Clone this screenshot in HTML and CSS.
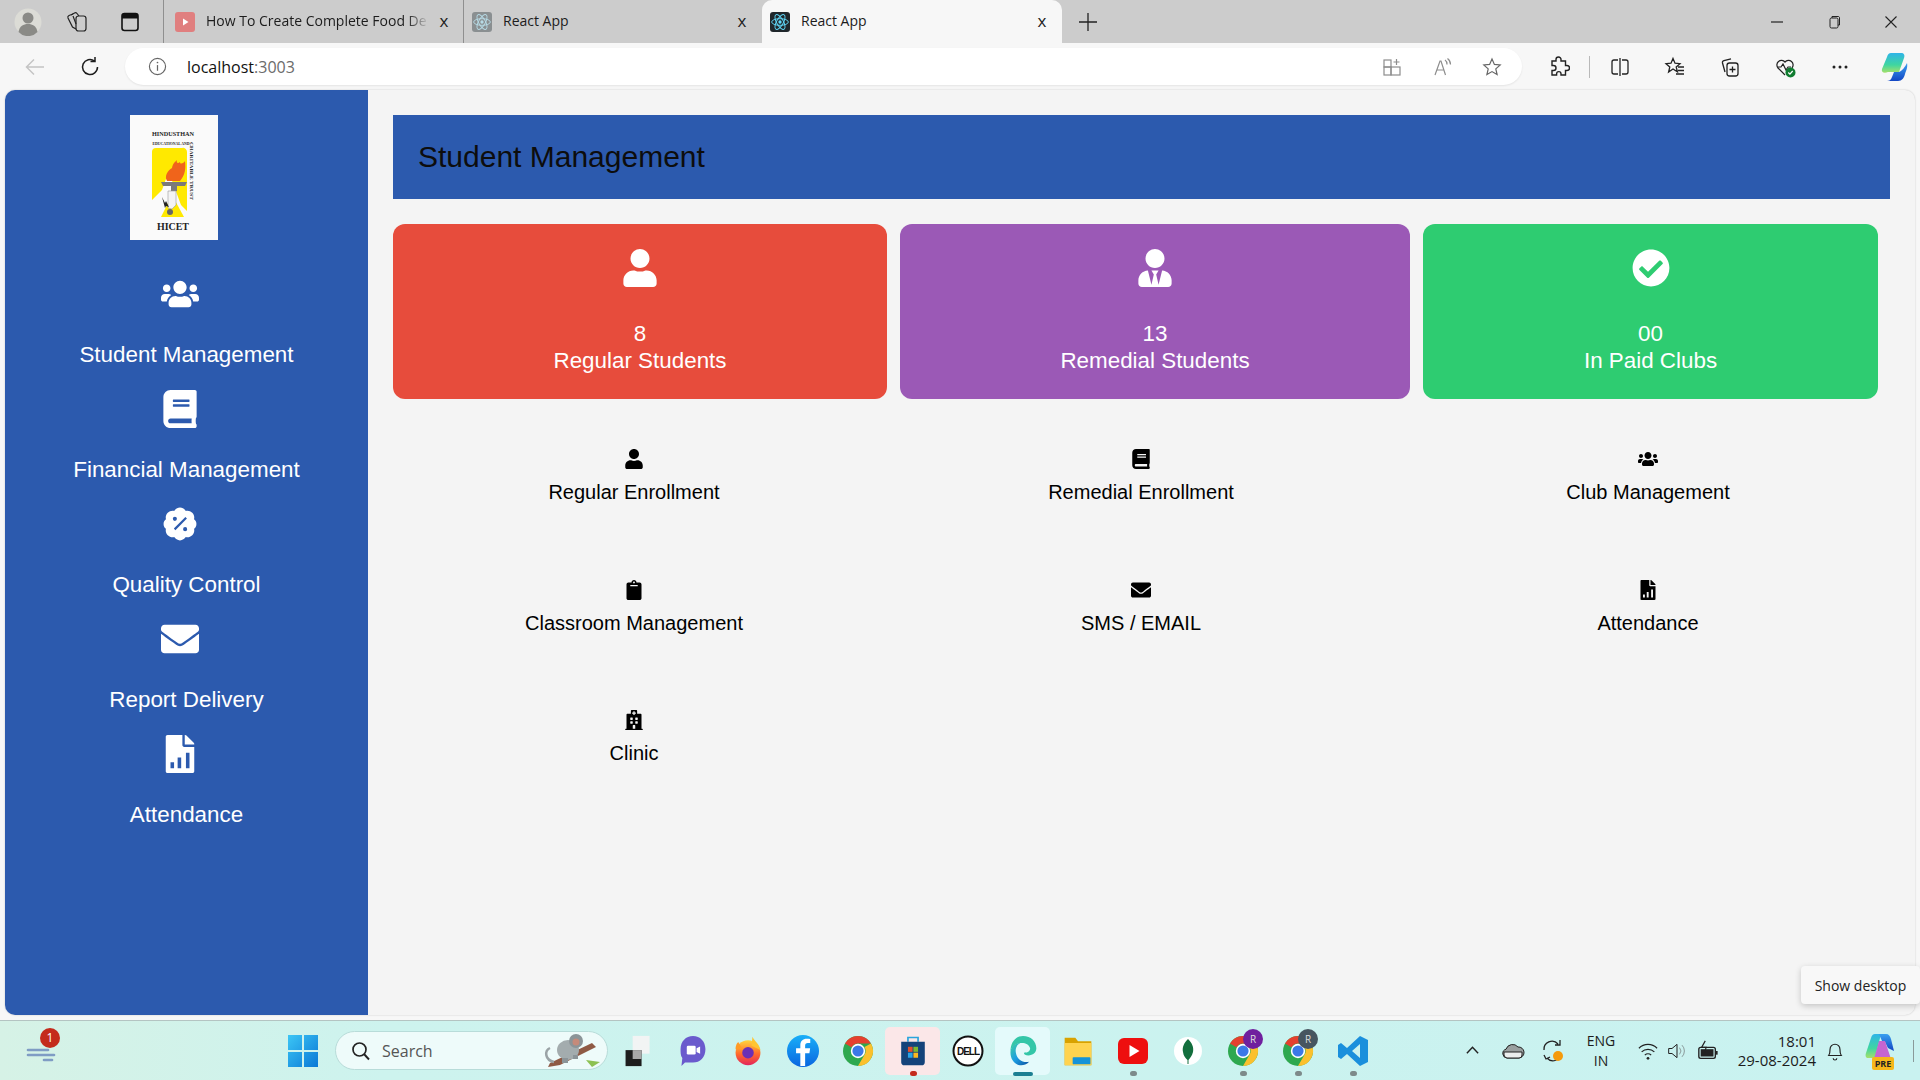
FILE: index.html
```html
<!DOCTYPE html>
<html>
<head>
    <meta charset="utf-8">
    <title>React App</title>
    <link rel="stylesheet" href="styles.css">
</head>
<body>
    <!-- icon sprite -->
    <svg class="sprite" xmlns="http://www.w3.org/2000/svg">
        <defs>
            <linearGradient id="edgeGrad" x1="0" y1="0" x2="1" y2="1"><stop offset="0" stop-color="#3fd0a0"/><stop offset=".5" stop-color="#1b9de2"/><stop offset="1" stop-color="#0c4f9e"/></linearGradient>
            <linearGradient id="winGrad" x1="0" y1="0" x2="1" y2="1"><stop offset="0" stop-color="#3cc6f5"/><stop offset="1" stop-color="#0a78d6"/></linearGradient>
            <linearGradient id="fbGrad" x1="0" y1="0" x2="0" y2="1"><stop offset="0" stop-color="#19aff8"/><stop offset="1" stop-color="#0a66e0"/></linearGradient>
            <linearGradient id="copLeft" x1="0" y1="0" x2="0" y2="1"><stop offset="0" stop-color="#2fb4e8"/><stop offset=".6" stop-color="#3fd6a0"/><stop offset="1" stop-color="#a6e06a"/></linearGradient>
            <linearGradient id="copRight" x1="0" y1="0" x2="0" y2="1"><stop offset="0" stop-color="#3aa0f0"/><stop offset="1" stop-color="#1246c4"/></linearGradient>
            <linearGradient id="foxGrad" x1="0" y1="0" x2="0" y2="1"><stop offset="0" stop-color="#ffd53d"/><stop offset=".55" stop-color="#ff6a2b"/><stop offset="1" stop-color="#e3245c"/></linearGradient>
        </defs>
        <symbol id="i-users" viewBox="0 0 640 512"><path d="M96 224c35.3 0 64-28.7 64-64s-28.7-64-64-64-64 28.7-64 64 28.7 64 64 64zm448 0c35.3 0 64-28.7 64-64s-28.7-64-64-64-64 28.7-64 64 28.7 64 64 64zm32 32h-64c-17.6 0-33.5 7.1-45.1 18.6 40.3 22.1 68.9 62 75.1 109.4h66c17.7 0 32-14.3 32-32v-32c0-35.3-28.7-64-64-64zm-256 0c61.9 0 112-50.1 112-112S381.9 32 320 32 208 82.1 208 144s50.1 112 112 112zm76.8 32h-8.3c-20.8 10-43.9 16-68.5 16s-47.6-6-68.5-16h-8.3C179.6 288 128 339.6 128 403.2V432c0 26.5 21.5 48 48 48h288c26.5 0 48-21.5 48-48v-28.8c0-63.6-51.6-115.2-115.2-115.2zm-223.7-13.4C161.5 263.1 145.6 256 128 256H64c-35.3 0-64 28.7-64 64v32c0 17.7 14.3 32 32 32h65.9c6.3-47.4 34.9-87.3 75.2-109.4z"/></symbol>
        <symbol id="i-book" viewBox="0 0 448 512"><path d="M448 360V24c0-13.3-10.7-24-24-24H96C43 0 0 43 0 96v320c0 53 43 96 96 96h328c13.3 0 24-10.7 24-24v-16c0-7.5-3.5-14.3-8.9-18.7-4.2-15.4-4.2-59.3 0-74.7 5.4-4.3 8.9-11.1 8.9-18.6zM128 134c0-3.3 2.7-6 6-6h212c3.3 0 6 2.7 6 6v20c0 3.3-2.7 6-6 6H134c-3.3 0-6-2.7-6-6v-20zm0 64c0-3.3 2.7-6 6-6h212c3.3 0 6 2.7 6 6v20c0 3.3-2.7 6-6 6H134c-3.3 0-6-2.7-6-6v-20zm253.4 250H96c-17.7 0-32-14.3-32-32 0-17.6 14.4-32 32-32h285.4c-1.9 17.1-1.9 46.9 0 64z"/></symbol>
        <symbol id="i-badge" viewBox="-40 -40 592 592"><path fill-rule="evenodd" d="M256 0c39 0 72 21 90 52 35-9 74 1 101 28s37 66 28 101c24 18 37 40 37 75s-13 57-37 75c9 35-1 74-28 101s-66 37-101 28c-18 24-51 52-90 52s-72-28-90-52c-35 9-74-1-101-28s-37-66-28-101C13 313 0 291 0 256s13-57 37-75c-9-35 1-74 28-101s66-37 101-28C184 21 217 0 256 0zM176 144a32 32 0 1 0 0 64 32 32 0 1 0 0-64zm160 160a32 32 0 1 0 0 64 32 32 0 1 0 0-64zM340 148l-180 180 24 24 180-180z"/></symbol>
        <symbol id="i-envelope" viewBox="0 0 512 512"><path d="M502.3 190.8c3.9-3.1 9.7-.2 9.7 4.7V400c0 26.5-21.5 48-48 48H48c-26.5 0-48-21.5-48-48V195.6c0-5 5.7-7.8 9.7-4.7 22.4 17.4 52.1 39.5 154.1 113.6 21.1 15.4 56.7 47.8 92.2 47.6 35.7.3 72-32.8 92.3-47.6 102-74.1 131.6-96.3 154-113.7zM256 320c23.2.4 56.6-29.2 73.4-41.4 132.7-96.3 142.8-104.7 173.4-128.7 5.8-4.5 9.2-11.5 9.2-18.9v-19c0-26.5-21.5-48-48-48H48C21.5 64 0 85.5 0 112v19c0 7.4 3.4 14.3 9.2 18.9 30.6 23.9 40.7 32.4 173.4 128.7 16.8 12.2 50.2 41.8 73.4 41.4z"/></symbol>
        <symbol id="i-report" viewBox="0 0 384 512"><path fill-rule="evenodd" d="M224 136V0H24C10.7 0 0 10.7 0 24v464c0 13.3 10.7 24 24 24h336c13.3 0 24-10.7 24-24V160H248c-13.2 0-24-10.8-24-24zM64 368h48v80H64zm96-64h48v144h-48zm112-64h48v208h-48z"/><path d="M384 121.9V128H256V0h6.1c6.4 0 12.5 2.5 17 7l97.9 98c4.5 4.5 7 10.6 7 16.9z"/></symbol>
        <symbol id="i-user" viewBox="0 0 448 512"><path d="M224 256c70.7 0 128-57.3 128-128S294.7 0 224 0 96 57.3 96 128s57.3 128 128 128zm89.6 32h-16.7c-22.2 10.2-46.9 16-72.9 16s-50.6-5.8-72.9-16h-16.7C60.2 288 0 348.2 0 422.4V464c0 26.5 21.5 48 48 48h352c26.5 0 48-21.5 48-48v-41.6c0-74.2-60.2-134.4-134.4-134.4z"/></symbol>
        <symbol id="i-tie" viewBox="0 0 448 512"><path d="M224 256c70.7 0 128-57.3 128-128S294.7 0 224 0 96 57.3 96 128s57.3 128 128 128zm95.8 32.6L272 480l-32-136 32-56h-96l32 56-32 136-47.8-191.4C56.9 292 0 350.3 0 422.4V464c0 26.5 21.5 48 48 48h352c26.5 0 48-21.5 48-48v-41.6c0-72.1-56.9-130.4-128.2-133.8z"/></symbol>
        <symbol id="i-check" viewBox="0 0 512 512"><path d="M504 256c0 136.967-111.033 248-248 248S8 392.967 8 256 119.033 8 256 8s248 111.033 248 248zM227.314 387.314l184-184c6.248-6.248 6.248-16.379 0-22.627l-22.627-22.627c-6.248-6.249-16.379-6.249-22.628 0L216 308.118l-70.059-70.059c-6.248-6.248-16.379-6.248-22.628 0l-22.627 22.627c-6.248 6.248-6.248 16.379 0 22.627l104 104c6.249 6.249 16.379 6.249 22.628.001z"/></symbol>
        <symbol id="i-clipboard" viewBox="0 0 384 512"><path d="M384 112v352c0 26.51-21.49 48-48 48H48c-26.51 0-48-21.49-48-48V112c0-26.51 21.49-48 48-48h80c0-35.29 28.71-64 64-64s64 28.71 64 64h80c26.51 0 48 21.49 48 48zM192 40c-13.255 0-24 10.745-24 24s10.745 24 24 24 24-10.745 24-24-10.745-24-24-24m96 114v-20a6 6 0 0 0-6-6H102a6 6 0 0 0-6 6v20a6 6 0 0 0 6 6h180a6 6 0 0 0 6-6z"/></symbol>
        <symbol id="i-hospital" viewBox="0 0 448 512"><path d="M448 492v20H0v-20c0-6.627 5.373-12 12-12h20V120c0-13.255 10.745-24 24-24h88V24c0-13.255 10.745-24 24-24h112c13.255 0 24 10.745 24 24v72h88c13.255 0 24 10.745 24 24v360h20c6.627 0 12 5.373 12 12zM308 192h-40c-6.627 0-12 5.373-12 12v40c0 6.627 5.373 12 12 12h40c6.627 0 12-5.373 12-12v-40c0-6.627-5.373-12-12-12zm-168 64h40c6.627 0 12-5.373 12-12v-40c0-6.627-5.373-12-12-12h-40c-6.627 0-12 5.373-12 12v40c0 6.627 5.373 12 12 12zm104 128h-40c-6.627 0-12 5.373-12 12v84h64v-84c0-6.627-5.373-12-12-12zm64-96h-40c-6.627 0-12 5.373-12 12v40c0 6.627 5.373 12 12 12h40c6.627 0 12-5.373 12-12v-40c0-6.627-5.373-12-12-12zm-116 12c0-6.627-5.373-12-12-12h-40c-6.627 0-12 5.373-12 12v40c0 6.627 5.373 12 12 12h40c6.627 0 12-5.373 12-12v-40zM182 96h26v26a6 6 0 0 0 6 6h20a6 6 0 0 0 6-6V96h26a6 6 0 0 0 6-6V70a6 6 0 0 0-6-6h-26V38a6 6 0 0 0-6-6h-20a6 6 0 0 0-6 6v26h-26a6 6 0 0 0-6 6v20a6 6 0 0 0 6 6z"/></symbol>
        <symbol id="i-react" viewBox="0 0 24 24"><g fill="none" stroke="currentColor" stroke-width="1.1"><ellipse cx="12" cy="12" rx="10" ry="4"/><ellipse cx="12" cy="12" rx="10" ry="4" transform="rotate(60 12 12)"/><ellipse cx="12" cy="12" rx="10" ry="4" transform="rotate(120 12 12)"/></g><circle cx="12" cy="12" r="2" fill="currentColor"/></symbol>
        <symbol id="i-chrome" viewBox="0 0 32 32"><circle cx="16" cy="16" r="15" fill="#2ea84f"/><path d="M16 1a15 15 0 0 1 13 7.5H16a7.5 7.5 0 0 0-6.5 3.8L3 8.5A15 15 0 0 1 16 1z" fill="#e5402f"/><path d="M29 8.5A15 15 0 0 1 16 31l6.5-11.2A7.5 7.5 0 0 0 22.5 12z" fill="#fbc02d"/><circle cx="16" cy="16" r="7.2" fill="#fff"/><circle cx="16" cy="16" r="5.6" fill="#3b78e7"/></symbol>
    </svg>

    <!-- browser tabs -->
    <div class="tabstrip">
        <div class="strip-tools">
            <svg class="profile" viewBox="0 0 28 28"><circle cx="14" cy="14" r="13.5" fill="#dcdcd6"/><circle cx="14" cy="10" r="5.5" fill="#8a8a86"/><path d="M4.5 24c1-6 5-8 9.500-8s8.500 2 9.500 8a13 13 0 0 1-19 0z" fill="#8a8a86"/></svg>
            <svg class="tool tool-collections" viewBox="0 0 24 24"><g fill="none" stroke="#222" stroke-width="1.200"><rect x="11" y="6" width="10" height="15" rx="2.500"/><path d="M11 19 7.500 17 3 8a2 2 0 0 1 1-2.500L8 4"/><path d="M14 6l-2-2.500a2 2 0 0 0-2.500-.5L6 5"/><path d="M8 6l3 8"/></g></svg>
            <svg class="tool tool-tabs" viewBox="0 0 24 24"><rect x="4" y="3.500" width="16" height="17" rx="2.500" fill="none" stroke="#111" stroke-width="1.600"/><path d="M4 6a2.500 2.500 0 0 1 2.500-2.500h11A2.500 2.500 0 0 1 20 6v2.500H4z" fill="#111"/></svg>
        </div>
        <div class="tab tab-first">
            <svg class="favicon" viewBox="0 0 20 20"><rect width="20" height="20" rx="3" fill="#e07f7f"/><path d="M8 6.500v7l5.500-3.500z" fill="#fff"/></svg>
            <span class="tab-title fade">How To Create Complete Food De</span>
            <span class="tab-close">x</span>
        </div>
        <div class="tab tab-second">
            <svg class="favicon react-dim" viewBox="0 0 20 20"><rect width="20" height="20" rx="3" fill="#8a8f91"/><use href="#i-react" width="20" height="20"/></svg>
            <span class="tab-title">React App</span>
            <span class="tab-close">x</span>
        </div>
        <div class="tab tab-active">
            <svg class="favicon react-live" viewBox="0 0 20 20"><rect width="20" height="20" rx="3" fill="#20272b"/><use href="#i-react" width="20" height="20"/></svg>
            <span class="tab-title">React App</span>
            <span class="tab-close">x</span>
        </div>
        <svg class="new-tab" viewBox="0 0 20 20"><path d="M10 1v18M1 10h18" stroke="#222" stroke-width="1.300"/></svg>
        <div class="window-controls">
            <svg viewBox="0 0 16 16"><path d="M2 8h12" stroke="#222" stroke-width="1.200"/></svg>
            <svg viewBox="0 0 16 16"><g fill="none" stroke="#222" stroke-width="1"><rect x="4" y="4" width="8" height="10" rx="1.500"/><path d="M6 4V2.500h6.500a1.500 1.500 0 0 1 1 1V11H12"/></g></svg>
            <svg viewBox="0 0 16 16"><path d="M2.500 2.500l11 11M13.500 2.500l-11 11" stroke="#222" stroke-width="1.100"/></svg>
        </div>
    </div>

    <!-- browser toolbar -->
    <div class="toolbar">
        <svg class="nav-btn nav-back" viewBox="0 0 24 24"><path d="M21 12H3.500M11 4.500 3.500 12l7.500 7.500" fill="none" stroke="#c4c4c4" stroke-width="1.500"/></svg>
        <svg class="nav-btn nav-reload" viewBox="0 0 24 24"><path d="M19.500 12a7.500 7.500 0 1 1-3-6M17 2v4.500h-4.500" fill="none" stroke="#1c1c1c" stroke-width="1.500"/></svg>
        <div class="address">
            <svg class="addr-info" viewBox="0 0 20 20"><circle cx="10" cy="10" r="8.500" fill="none" stroke="#666" stroke-width="1.200"/><path d="M10 8.500v6" stroke="#666" stroke-width="1.300"/><circle cx="10" cy="5.800" r=".9" fill="#666"/></svg>
            <span class="url">localhost<span class="url-port">:3003</span></span>
            <svg class="addr-icon" viewBox="0 0 20 20"><g fill="none" stroke="#8d8d8d" stroke-width="1.200"><rect x="2" y="3" width="7" height="7"/><rect x="2" y="10" width="7" height="8"/><rect x="9" y="10" width="9" height="8"/><path d="M14.500 2v6M11.500 5h6"/></g></svg>
            <svg class="addr-icon" viewBox="0 0 20 20"><g fill="none" stroke="#8d8d8d" stroke-width="1.200"><path d="M3 18 8 4h1l4.500 14M5 13h7"/><path d="M13 3c1.500 1 2 2.500 2 4.500M15.500 1.500c2 1.500 3 3.500 3 6"/></g></svg>
            <svg class="addr-icon" viewBox="0 0 20 20"><path d="M10 2l2.400 5.400 5.800.6-4.400 3.900 1.300 5.700L10 14.600l-5.100 3 1.300-5.700L1.800 8l5.800-.6z" fill="none" stroke="#666" stroke-width="1.200"/></svg>
        </div>
        <div class="toolbar-right">
            <svg viewBox="0 0 22 22" class="tb-ext"><path d="M8 3.500a2.500 2.500 0 0 1 5 0V5h4.500v4.500H19a2.500 2.500 0 0 1 0 5h-1.500V19H13v-1.200a2.200 2.200 0 0 0-4.400 0V19H4v-4.500h1.500a2.500 2.500 0 0 0 0-5H4V5h4z" fill="none" stroke="#222" stroke-width="1.400"/></svg>
            <span class="tb-sep"></span>
            <svg viewBox="0 0 22 22" class="tb-split"><g fill="none" stroke="#222" stroke-width="1.300"><path d="M9 4H5a2 2 0 0 0-2 2v10a2 2 0 0 0 2 2h4M13 4h4a2 2 0 0 1 2 2v10a2 2 0 0 1-2 2h-4M11 2v18"/></g></svg>
            <svg viewBox="0 0 22 22" class="tb-favs"><g fill="none" stroke="#222" stroke-width="1.300"><path d="M9 2.500l2 4.700 5 .5-3.800 3.300 1.200 4.800L9 13l-4.400 3 1.200-5L2 7.700l5-.5z"/><path d="M14 11h6M14 14.500h6M12 18h8"/></g></svg>
            <svg viewBox="0 0 22 22" class="tb-coll"><g fill="none" stroke="#222" stroke-width="1.300"><path d="M6 16 3.500 7a2 2 0 0 1 1.400-2.400L12 2.800"/><rect x="8" y="7" width="11" height="13" rx="2.500"/><path d="M13.500 10.500v6M10.500 13.500h6"/></g></svg>
            <svg viewBox="0 0 22 22" class="tb-health"><path d="M11 19 4 12a4.500 4.500 0 0 1 7-6 4.500 4.500 0 0 1 7 6M3 11h4l2-3 3 6 2-3h3" fill="none" stroke="#222" stroke-width="1.200"/><circle cx="16.500" cy="16.500" r="5" fill="#107c30"/><path d="M14.300 16.500l1.600 1.700 2.800-3.200" fill="none" stroke="#fff" stroke-width="1.200"/></svg>
            <svg viewBox="0 0 22 22" class="tb-more"><circle cx="5" cy="11" r="1.500" fill="#222"/><circle cx="11" cy="11" r="1.500" fill="#222"/><circle cx="17" cy="11" r="1.500" fill="#222"/></svg>
            <svg viewBox="0 0 30 30" class="tb-copilot"><path d="M12 1h10c3 0 4 2 3 5l-5 14H9c-4 2-7 0-6-3L8 5c.7-2.500 2-4 4-4z" fill="url(#copLeft)"/><path d="M28 11c1 4-1 8-2 11-1 4-3 7-7 7H8c2 0 4-1 5-4l2-5h5c3-1 6-5 8-9z" fill="url(#copRight)"/></svg>
        </div>
    </div>

    <!-- the app -->
    <div class="viewport">
        <aside class="sidebar">
            <svg class="logo" viewBox="0 0 88 125">
                <rect width="88" height="125" fill="#fafafa"/>
                <text x="43" y="21" textLength="42" lengthAdjust="spacingAndGlyphs" class="logo-small">HINDUSTHAN</text>
                <text x="41" y="30" textLength="37" lengthAdjust="spacingAndGlyphs" class="logo-tiny">EDUCATIONAL AND</text>
                <text class="logo-tiny" transform="translate(60 27) rotate(90)" x="29" textLength="58" lengthAdjust="spacingAndGlyphs">CHARITABLE TRUST</text>
                <path d="M22 37a4 4 0 0 1 4-4h26a4 4 0 0 1 5 4v59l-6-6-10-27-5 1-4 11-10 10z" fill="#ffe900"/>
                <path d="M31 102l11-22 12 22z" fill="#ffe900"/>
                <path d="M37 66c-3-5 1-11 5-13 1-5 3-6 5-8-1 3 1 4 3 2 0 3 4 1 5-1 1 8 0 14-5 20z" fill="#f0641b"/>
                <path d="M31 67h26l-2 4H47v5h-6v-5h-8z" fill="#7a7a7a"/>
                <path d="M38 76h8v14l-4 4-4-1z" fill="#f4f4f4" stroke="#9a9a9a" stroke-width=".6"/>
                <path d="M32 82l3 6 1-2 3 6-3-1-1 2z" fill="#222"/>
                <circle cx="40" cy="97" r="3" fill="#666"/>
                <text x="43" y="115" textLength="32" lengthAdjust="spacingAndGlyphs" class="logo-name">HICET</text>
            </svg>
            <nav class="side-nav">
                <a class="side-item"><svg class="side-icon icon-short"><use href="#i-users"/></svg><span>Student Management</span></a>
                <a class="side-item"><svg class="side-icon"><use href="#i-book"/></svg><span>Financial Management</span></a>
                <a class="side-item"><svg class="side-icon"><use href="#i-badge"/></svg><span>Quality Control</span></a>
                <a class="side-item"><svg class="side-icon"><use href="#i-envelope"/></svg><span>Report Delivery</span></a>
                <a class="side-item"><svg class="side-icon"><use href="#i-report"/></svg><span>Attendance</span></a>
            </nav>
        </aside>
        <main class="content">
            <header class="page-head">Student Management</header>
            <section class="stats">
                <div class="stat stat-red"><svg class="stat-icon"><use href="#i-user"/></svg><div class="stat-num">8</div><div>Regular Students</div></div>
                <div class="stat stat-purple"><svg class="stat-icon"><use href="#i-tie"/></svg><div class="stat-num">13</div><div>Remedial Students</div></div>
                <div class="stat stat-green"><svg class="stat-icon"><use href="#i-check"/></svg><div class="stat-num">00</div><div>In Paid Clubs</div></div>
            </section>
            <section class="actions">
                <a class="action"><svg class="action-icon"><use href="#i-user"/></svg><span>Regular Enrollment</span></a>
                <a class="action"><svg class="action-icon"><use href="#i-book"/></svg><span>Remedial Enrollment</span></a>
                <a class="action"><svg class="action-icon"><use href="#i-users"/></svg><span>Club Management</span></a>
                <a class="action"><svg class="action-icon"><use href="#i-clipboard"/></svg><span>Classroom Management</span></a>
                <a class="action"><svg class="action-icon"><use href="#i-envelope"/></svg><span>SMS / EMAIL</span></a>
                <a class="action"><svg class="action-icon"><use href="#i-report"/></svg><span>Attendance</span></a>
                <a class="action"><svg class="action-icon"><use href="#i-hospital"/></svg><span>Clinic</span></a>
            </section>
        </main>
        <div class="desktop-tip">Show desktop</div>
    </div>

    <!-- windows taskbar -->
    <footer class="taskbar">
        <div class="widget">
            <svg viewBox="0 0 30 16" class="widget-wind"><g fill="none" stroke="#7f9cc4" stroke-width="2.600" stroke-linecap="round"><path d="M2 3h20"/><path d="M2 8h26"/><path d="M18 13h8"/></g></svg>
            <span class="widget-badge">1</span>
        </div>
        <svg class="start" viewBox="0 0 30 36"><path d="M0 2h14v15H0zM16 2h14v15H16zM0 19h14v15H0zM16 19h14v15H16z" fill="url(#winGrad)"/></svg>
        <div class="search">
            <svg class="search-glass" viewBox="0 0 20 20"><circle cx="8.500" cy="8.500" r="6.500" fill="none" stroke="#222" stroke-width="1.700"/><path d="M13 13l5 5.500" stroke="#222" stroke-width="1.900"/></svg>
            <span class="search-text">Search</span>
            <svg class="search-art" viewBox="0 0 60 34">
                <path d="M6 33l2-4 42-20 4 4-36 18z" fill="#8f5a45"/>
                <path d="M44 26l14 2-8 5z" fill="#8cc152"/>
                <path d="M12 28C3 26 2 17 8 14" fill="none" stroke="#9aa3a6" stroke-width="2.500"/>
                <ellipse cx="26" cy="16" rx="11" ry="10" fill="#a3acae"/>
                <path d="M20 24h6v5h-6zM31 21h5v4h-5z" fill="#8b9498"/>
                <circle cx="34" cy="7" r="7" fill="#8b9498"/>
                <circle cx="34" cy="8" r="3.500" fill="#c58a7a"/>
            </svg>
        </div>
        <div class="apps">
            <div class="app"><svg viewBox="0 0 30 36"><rect x="9" y="1" width="19" height="20" fill="#f2f4f4"/><rect x="1" y="17" width="18" height="18" fill="#1d1d1d"/><rect x="9" y="17" width="10" height="10" fill="#a8a8a8"/></svg></div>
            <div class="app"><svg viewBox="0 0 30 36"><path d="M15 1c8 0 14 6 14 15s-6 15-14 15H6l-4 4 1-9C1 23 1 20 1 16 1 7 7 1 15 1z" fill="#6a5acd"/><rect x="8" y="12" width="10" height="10" rx="1.500" fill="#fff"/><path d="M19 15l4-2v8l-4-2z" fill="#fff"/></svg></div>
            <div class="app"><svg viewBox="0 0 30 36"><circle cx="15" cy="20" r="14" fill="url(#foxGrad)"/><path d="M20 2c2 5 8 8 9 15L19 12z" fill="#ffc531"/><circle cx="15" cy="20" r="6.500" fill="#6b2fb5"/><path d="M1 16c0-4 1-6 3-8l5 8z" fill="#ff9b26"/></svg></div>
            <div class="app"><svg viewBox="0 0 30 30"><circle cx="15" cy="15" r="15" fill="url(#fbGrad)"/><path d="M17 29V17h4l.7-4.500H17V10c0-1.400.7-2.400 2.500-2.400h2.300V3.800C20.800 3.700 19.500 3.500 18.400 3.500c-3.500 0-5.900 2.100-5.900 6v3H8.500V17h4v12z" fill="#fff"/></svg></div>
            <div class="app"><svg viewBox="0 0 32 32"><use href="#i-chrome"/></svg></div>
            <div class="app app-store">
                <svg viewBox="0 0 30 38"><path d="M9 8V3h12v5" fill="none" stroke="#2aa5dc" stroke-width="2"/><path d="M1 8h28v24a4 4 0 0 1-4 4H5a4 4 0 0 1-4-4z" fill="#14437a"/><rect x="9" y="14" width="5.500" height="6" fill="#e5502d"/><rect x="15.500" y="14" width="5.500" height="6" fill="#7cb82f"/><rect x="9" y="21" width="5.500" height="6" fill="#29a4e8"/><rect x="15.500" y="21" width="5.500" height="6" fill="#fbb81f"/></svg>
                <i class="run-dot dot-red"></i>
            </div>
            <div class="app"><svg viewBox="0 0 32 32"><circle cx="16" cy="16" r="14.500" fill="#fff" stroke="#111" stroke-width="2"/><text x="16" y="19.500" class="dell-mark">DELL</text></svg></div>
            <div class="app app-edge">
                <svg viewBox="0 0 32 36"><path d="M16 1c9 0 15 6 15 14 0 5-4 8-9 8-3 0-5-1-5-3 5 0 7-2 7-5-1-4-5-6-9-6C8 9 3 13 2 18 2 8 8 1 16 1z" fill="#34c6a8"/><path d="M2 18c1-6 6-9 11-9-4 2-6 6-5 11 1 7 8 12 15 10-3 3-6 4-9 4-7 0-13-7-12-16z" fill="url(#edgeGrad)"/></svg>
                <i class="run-bar"></i>
            </div>
            <div class="app"><svg viewBox="0 0 32 36"><path d="M1 3h12l3 4h15v27H1z" fill="#d9a200"/><rect x="1" y="9" width="30" height="25" fill="#ffd34f"/><rect x="10" y="25" width="20" height="8" rx="1" fill="#1593d8"/></svg></div>
            <div class="app"><svg viewBox="0 0 32 28"><rect x="1" y="1" width="30" height="26" rx="6" fill="#ee0f0f"/><path d="M12.500 8v12l10-6z" fill="#fff"/></svg><i class="run-dot"></i></div>
            <div class="app"><svg viewBox="0 0 32 32"><circle cx="16" cy="16" r="14" fill="#fff"/><path d="M16 4c4 4 6 8 5 13-1 4-3 6-4.500 8V29h-1v-4c-2-2-4-4-4.500-8C10 12 12 8 16 4z" fill="#136e3d"/></svg></div>
            <div class="app">
                <svg viewBox="0 0 32 32"><use href="#i-chrome"/></svg>
                <b class="chrome-tag tag-purple">R</b><i class="run-dot"></i>
            </div>
            <div class="app">
                <svg viewBox="0 0 32 32"><use href="#i-chrome"/></svg>
                <b class="chrome-tag tag-slate">R</b><i class="run-dot"></i>
            </div>
            <div class="app"><svg viewBox="0 0 32 32"><path d="M23 1l8 4v22l-8 4L10 19l-6 5-3-2V10l3-2 6 5zM23 9l-8 7 8 7z" fill="#1a8fdc" fill-rule="evenodd"/></svg><i class="run-dot"></i></div>
        </div>
        <div class="tray">
            <svg class="tray-chevron" viewBox="0 0 16 16"><path d="M2 11l6-6.500 6 6.500" fill="none" stroke="#222" stroke-width="1.500"/></svg>
            <svg class="tray-cloud" viewBox="0 0 24 20"><path d="M6 17a4.500 4.500 0 0 1-1-8.800A7 7 0 0 1 17 6a5.500 5.500 0 0 1 1 11z" fill="#9a9f9f" stroke="#222" stroke-width="1"/><path d="M3 11h18v3a3 3 0 0 1-3 3H6a3.500 3.500 0 0 1-3-3z" fill="#eceeee" stroke="#222" stroke-width="1"/></svg>
            <svg class="tray-sync" viewBox="0 0 24 28"><path d="M3 13a8 8 0 0 1 14-6M19 3v5h-5M20 16a8 8 0 0 1-14 5M3 18l2 4 4-2" fill="none" stroke="#222" stroke-width="1.300"/><circle cx="17" cy="19" r="5" fill="#f59a0c"/></svg>
            <div class="tray-lang"><span>ENG</span><span>IN</span></div>
            <svg class="tray-wifi" viewBox="0 0 24 22"><g fill="none" stroke="#222" stroke-width="1.300"><path d="M2 8a14 14 0 0 1 20 0M5 12a10 10 0 0 1 14 0M8.500 15.500a5 5 0 0 1 7 0"/></g><circle cx="12" cy="19" r="1.500" fill="#222"/></svg>
            <svg class="tray-sound" viewBox="0 0 24 24"><path d="M2 9h4l6-5v16l-6-5H2z" fill="none" stroke="#222" stroke-width="1.200"/><path d="M15 8a6 6 0 0 1 0 8M18 5a10 10 0 0 1 0 14" fill="none" stroke="#8a9a9a" stroke-width="1.200"/></svg>
            <svg class="tray-batt" viewBox="0 0 24 24"><rect x="2" y="8" width="18" height="12" rx="2" fill="none" stroke="#222" stroke-width="1.500"/><rect x="4" y="10" width="14" height="8" fill="#222"/><rect x="20.500" y="12" width="2" height="4" fill="#222"/><path d="M9 1 5 8h5l-2 6" fill="none" stroke="#222" stroke-width="1.300"/></svg>
            <div class="tray-clock"><span>18:01</span><span>29-08-2024</span></div>
            <svg class="tray-bell" viewBox="0 0 20 24"><path d="M3 17c1.500-2 1.500-4 1.500-7a5.500 5.500 0 0 1 11 0c0 3 0 5 1.500 7zM8 20a2 2 0 0 0 4 0" fill="none" stroke="#222" stroke-width="1.300"/></svg>
            <div class="tray-copilot">
                <svg viewBox="0 0 30 28"><path d="M10 1h6l-6 24H3c-2 0-3-2-2-5L6 5c.7-2.500 2-4 4-4z" fill="url(#copLeft)"/><path d="M14 1h7c3 0 4 2 5 5l3 12-6-3-3-6-3-1z" fill="url(#copRight)"/><path d="M14 8h6l6 18H9z" fill="#c565d0"/></svg>
                <b class="pre-tag">PRE</b>
            </div>
            <span class="tray-edge"></span>
        </div>
    </footer>
</body>
</html>
```

FILE: styles.css
```css
* {
    box-sizing: border-box;
}
html, body {
    height: 100%;
}
body {
    margin: 0;
    width: 1920px;
    height: 1080px;
    overflow: hidden;
    display: flex;
    flex-direction: column;
    background: #f7f7f7;
    font-family: "Liberation Sans", Arial, sans-serif;
}
.sprite {
    position: absolute;
    width: 0;
    height: 0;
}

/* tabs */
.tabstrip {
    height: 43px;
    flex: none;
    display: flex;
    align-items: center;
    background: #cccccc;
    font-family: "Open Sans", sans-serif;
    font-size: 14px;
    color: #1c1c1c;
}
.strip-tools {
    width: 163px;
    height: 100%;
    flex: none;
    display: flex;
    align-items: center;
    padding-left: 14px;
}
.profile {
    width: 28px;
    height: 28px;
}
.tool {
    width: 24px;
    height: 24px;
}
.tool-collections {
    margin-left: 23px;
}
.tool-tabs {
    margin-left: 29px;
}
.tab {
    height: 100%;
    display: flex;
    align-items: center;
    flex: none;
}
.tab-first {
    width: 300px;
    padding: 0 12px 0 11px;
    border-left: 1px solid #8f8f8f;
}
.tab-second {
    width: 299px;
    padding: 0 13px 0 8px;
    border-left: 1px solid #8f8f8f;
}
.tab-active {
    width: 300px;
    padding: 0 13px 0 8px;
    background: #f7f7f7;
    border-radius: 10px 10px 0 0;
}
.favicon {
    width: 20px;
    height: 20px;
    flex: none;
    margin-right: 11px;
}
.react-dim {
    color: #b7dbe6;
}
.react-live {
    color: #61dafb;
}
.tab-title {
    flex: 1;
    white-space: nowrap;
    padding-bottom: 2px;
}
.tab-title.fade {
    -webkit-mask-image: linear-gradient(90deg, #000 90%, transparent 100%);
}
.tab-close {
    font-size: 17px;
    width: 14px;
    margin-left: 8px;
    text-align: center;
    line-height: 1;
    padding-bottom: 3px;
}
.new-tab {
    width: 20px;
    height: 20px;
    margin-left: 16px;
}
.window-controls {
    margin-left: auto;
    display: flex;
    gap: 41px;
    padding-right: 21px;
}
.window-controls svg {
    width: 16px;
    height: 16px;
}

/* toolbar */
.toolbar {
    height: 47px;
    flex: none;
    display: flex;
    align-items: center;
}
.nav-btn {
    width: 24px;
    height: 24px;
    flex: none;
}
.nav-back {
    margin-left: 23px;
}
.nav-reload {
    margin-left: 31px;
}
.address {
    width: 1397px;
    height: 37px;
    margin-left: 23px;
    flex: none;
    display: flex;
    align-items: center;
    background: #fff;
    border-radius: 19px;
    padding: 0 20px 0 23px;
    box-shadow: 0 1px 2px rgba(0, 0, 0, .08);
}
.addr-info {
    width: 19px;
    height: 19px;
}
.url {
    margin-left: 20px;
    font-family: "Open Sans", sans-serif;
    font-size: 16px;
    color: #111;
    flex: 1;
}
.url-port {
    color: #6b6b6b;
}
.addr-icon {
    width: 20px;
    height: 20px;
    margin-left: 30px;
}
.toolbar-right {
    flex: 1;
    display: flex;
    align-items: center;
    padding-left: 26px;
}
.toolbar-right svg {
    width: 22px;
    height: 22px;
    flex: none;
}
.tb-sep {
    width: 1px;
    height: 22px;
    background: #b9b9b9;
    margin: 0 19px;
}
.tb-favs, .tb-coll, .tb-health, .tb-more {
    margin-left: 33px;
}
.toolbar-right .tb-copilot {
    width: 30px;
    height: 30px;
    margin-left: 28px;
}

/* page */
.viewport {
    flex: 1;
    position: relative;
    display: flex;
    margin: 0 5px 5px;
    background: #f4f4f4;
    border-radius: 10px;
    box-shadow: 0 0 2px rgba(0, 0, 0, .2);
    min-height: 0;
}
.sidebar {
    width: 363px;
    flex: none;
    background: #2c5aae;
    border-radius: 10px 0 0 10px;
    padding-top: 25px;
    color: #fff;
}
.logo {
    display: block;
    width: 88px;
    height: 125px;
    margin: 0 0 0 125px;
}
.logo text {
    font-family: "Liberation Serif", serif;
    font-weight: bold;
    text-anchor: middle;
    fill: #222;
}
.logo .logo-small {
    font-size: 7px;
}
.logo .logo-tiny {
    font-size: 4.500px;
}
.logo .logo-name {
    font-size: 11px;
}
.side-nav {
    padding-top: 35px;
}
.side-item {
    display: flex;
    flex-direction: column;
    align-items: center;
    height: 115px;
    font-size: 22.400px;
    line-height: 28px;
}
.side-icon {
    width: 38px;
    height: 38px;
    margin-right: 14px;
    margin-bottom: 28px;
    flex: none;
    fill: #fff;
}
.content {
    flex: 1;
    padding: 25px 25px 0;
    min-width: 0;
}
.page-head {
    height: 84px;
    display: flex;
    align-items: center;
    padding-left: 25px;
    background: #2c5aae;
    font-size: 30px;
    color: #0d0d0d;
}
.stats {
    display: grid;
    grid-template-columns: 494px 510px 455px;
    column-gap: 13px;
    margin-top: 25px;
}
.stat {
    height: 175px;
    border-radius: 12px;
    color: #fff;
    text-align: center;
    font-size: 22.400px;
    line-height: 27px;
    padding-top: 25px;
}
.stat-icon {
    display: block;
    width: 38px;
    height: 38px;
    margin: 0 auto 33px;
    fill: #fff;
}
.stat-red {
    background: #e74c3c;
}
.stat-purple {
    background: #9b59b6;
}
.stat-green {
    background: #2ecc71;
}
.actions {
    display: grid;
    grid-template-columns: repeat(3, 482px);
    column-gap: 25px;
    row-gap: 73.500px;
    margin-top: 50px;
}
.action {
    display: flex;
    flex-direction: column;
    align-items: center;
    height: 57px;
    font-size: 20px;
    line-height: 24px;
    color: #000;
}
.action-icon {
    width: 20px;
    height: 20px;
    margin-bottom: 11px;
    flex: none;
    fill: #000;
}
.desktop-tip {
    position: absolute;
    right: -5px;
    bottom: 11px;
    width: 119px;
    height: 38px;
    display: flex;
    align-items: center;
    justify-content: center;
    background: #f8f8f8;
    border-radius: 4px;
    box-shadow: 0 2px 6px rgba(0, 0, 0, .2);
    font-family: "Open Sans", sans-serif;
    font-size: 14px;
    color: #222;
}

/* taskbar */
.taskbar {
    height: 60px;
    flex: none;
    display: flex;
    align-items: center;
    border-top: 1px solid #b4c4c2;
    background: linear-gradient(90deg, #d6f2e6 0, #cdf3ee 20%, #c9f2f0 100%);
    font-family: "Open Sans", sans-serif;
    color: #1c1c1c;
}
.widget {
    width: 288px;
    height: 100%;
    flex: none;
    position: relative;
}
.widget-wind {
    position: absolute;
    left: 26px;
    top: 26px;
    width: 30px;
    height: 16px;
}
.widget-badge {
    position: absolute;
    left: 40px;
    top: 7px;
    width: 20px;
    height: 20px;
    border-radius: 50%;
    background: #c42b1c;
    color: #fff;
    font-size: 12px;
    text-align: center;
    line-height: 20px;
}
.start {
    width: 30px;
    height: 36px;
    flex: none;
}
.search {
    width: 273px;
    height: 39px;
    flex: none;
    margin-left: 17px;
    display: flex;
    align-items: center;
    padding-left: 15px;
    background: #eefbfa;
    border: 1px solid #b8dcd9;
    border-radius: 20px;
    color: #555;
    font-size: 16px;
}
.search-glass {
    width: 20px;
    height: 20px;
}
.search-text {
    margin-left: 11px;
    flex: 1;
}
.search-art {
    width: 60px;
    height: 34px;
    margin-right: 5px;
}
.apps {
    display: flex;
    margin-left: 2px;
    flex: none;
}
.app {
    width: 55px;
    height: 48px;
    display: flex;
    align-items: center;
    justify-content: center;
    position: relative;
    flex: none;
}
.app svg {
    width: 32px;
    height: 32px;
}
.app-store {
    background: #fbe7e8;
    border-radius: 5px;
}
.app-edge {
    background: #e4fafb;
    border-radius: 5px;
}
.run-dot {
    position: absolute;
    left: 50%;
    bottom: -1px;
    width: 7px;
    height: 5px;
    margin-left: -3px;
    border-radius: 3px;
    background: #7d8a8a;
}
.dot-red {
    background: #c42b1c;
}
.run-bar {
    position: absolute;
    left: 50%;
    bottom: -1px;
    width: 20px;
    height: 4px;
    margin-left: -10px;
    border-radius: 2px;
    background: #1c7f92;
}
.dell-mark {
    font-family: "Liberation Sans", sans-serif;
    font-size: 10px;
    font-weight: bold;
    text-anchor: middle;
    fill: #111;
    letter-spacing: -1px;
}
.chrome-tag {
    position: absolute;
    left: 28px;
    top: 2px;
    width: 20px;
    height: 20px;
    border-radius: 50%;
    color: #ddd;
    font-size: 10px;
    font-weight: normal;
    text-align: center;
    line-height: 20px;
}
.tag-purple {
    background: #6f1f9e;
}
.tag-slate {
    background: #47555f;
}
.tray {
    flex: 1;
    height: 100%;
    display: flex;
    align-items: center;
    padding-left: 85px;
    font-size: 14px;
}
.tray svg {
    flex: none;
}
.tray-chevron {
    width: 15px;
    height: 15px;
}
.tray-cloud {
    width: 24px;
    height: 20px;
    margin-left: 21px;
}
.tray-sync {
    width: 24px;
    height: 28px;
    margin-left: 16px;
}
.tray-lang {
    width: 34px;
    margin-left: 19px;
    display: flex;
    flex-direction: column;
    align-items: center;
    line-height: 20px;
}
.tray-wifi {
    width: 22px;
    height: 20px;
    margin-left: 19px;
}
.tray-sound {
    width: 20px;
    height: 22px;
    margin-left: 8px;
}
.tray-batt {
    width: 22px;
    height: 24px;
    margin-left: 10px;
}
.tray-clock {
    width: 90px;
    margin-left: 7px;
    display: flex;
    flex-direction: column;
    align-items: flex-end;
    font-size: 15px;
    line-height: 19px;
}
.tray-bell {
    width: 18px;
    height: 24px;
    margin-left: 10px;
}
.tray-copilot {
    width: 30px;
    height: 36px;
    margin-left: 21px;
    position: relative;
}
.tray-copilot svg {
    width: 30px;
    height: 28px;
}
.pre-tag {
    position: absolute;
    left: 7px;
    bottom: -1px;
    width: 22px;
    height: 13px;
    background: #f6b71a;
    border-radius: 2px;
    color: #222;
    font-size: 9px;
    line-height: 13px;
    text-align: center;
}
.tray-edge {
    width: 1px;
    height: 22px;
    background: #8a9a9a;
    margin-left: 18px;
}
```
